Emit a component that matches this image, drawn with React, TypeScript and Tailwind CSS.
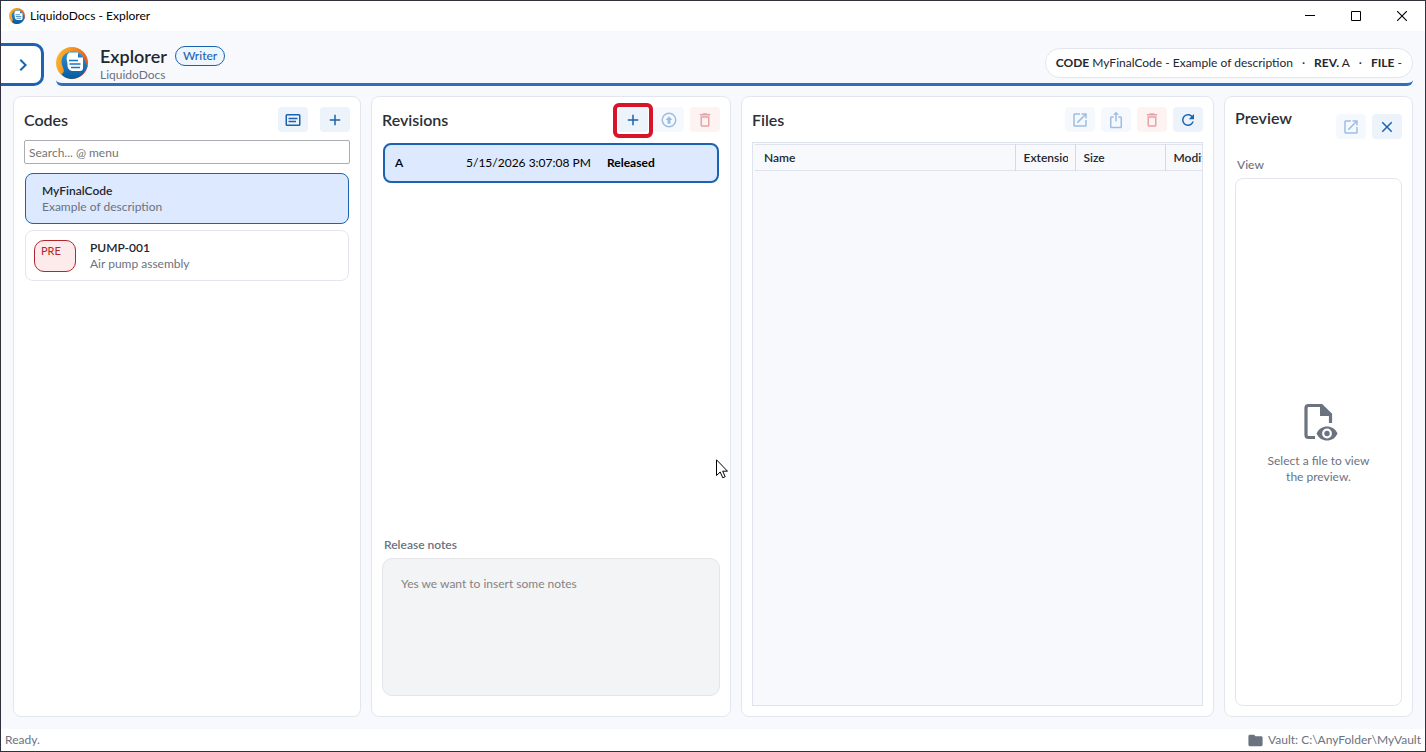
import React, { useState } from 'react'
import clsx from 'clsx'

const paths = {
  chevron: 'M8.59 16.58L13.17 12L8.59 7.41L10 6L16 12L10 18L8.59 16.58Z',
  card: 'M20 20H4A2 2 0 0 1 2 18V6A2 2 0 0 1 4 4H20A2 2 0 0 1 22 6V18A2 2 0 0 1 20 20M4 6V18H20V6H4M6 9H18V11H6V9M6 13H16V15H6V13Z',
  plus: 'M19 13H13V19H11V13H5V11H11V5H13V11H19V13Z',
  release:
    'M20 12A8 8 0 0 0 12 4A8 8 0 0 0 4 12A8 8 0 0 0 12 20A8 8 0 0 0 20 12M22 12A10 10 0 0 1 12 22A10 10 0 0 1 2 12A10 10 0 0 1 12 2A10 10 0 0 1 22 12M10 17V12H7.5L12 7L16.5 12H14V17H10Z',
  trash:
    'M6 19A2 2 0 0 0 8 21H16A2 2 0 0 0 18 19V7H6V19M8 9H16V19H8V9M15.5 4L14.5 3H9.5L8.5 4H5V6H19V4H15.5Z',
  open: 'M14 3V5H17.59L7.76 14.83L9.17 16.24L19 6.41V10H21V3M19 19H5V5H12V3H5C3.89 3 3 3.9 3 5V19A2 2 0 0 0 5 21H19A2 2 0 0 0 21 19V12H19V19Z',
  share:
    'M12 1L8 5H11V14H13V5H16M18 23H6C4.89 23 4 22.1 4 21V9A2 2 0 0 1 6 7H9V9H6V21H18V9H15V7H18A2 2 0 0 1 20 9V21A2 2 0 0 1 18 23Z',
  refresh:
    'M17.65 6.35C16.2 4.9 14.21 4 12 4A8 8 0 0 0 4 12A8 8 0 0 0 12 20C15.73 20 18.84 17.45 19.73 14H17.65C16.83 16.33 14.61 18 12 18A6 6 0 0 1 6 12A6 6 0 0 1 12 6C13.66 6 15.14 6.69 16.22 7.78L13 11H20V4L17.65 6.35Z',
  close:
    'M19 6.41L17.59 5L12 10.59L6.41 5L5 6.41L10.59 12L5 17.59L6.41 19L12 13.41L17.59 19L19 17.59L13.41 12L19 6.41Z',
  folder:
    'M10 4H4C2.89 4 2 4.89 2 6V18A2 2 0 0 0 4 20H20A2 2 0 0 0 22 18V8C22 6.89 21.1 6 20 6H12L10 4Z',
}

type IconName = keyof typeof paths

function Icon({ name, className = 'size-[18px]' }: { name: IconName; className?: string }) {
  return (
    <svg viewBox="0 0 24 24" fill="currentColor" aria-hidden="true" className={className}>
      <path d={paths[name]} />
    </svg>
  )
}

function Logo({ className }: { className: string }) {
  return (
    <svg viewBox="0 0 32 32" aria-hidden="true" className={className}>
      <defs>
        <linearGradient id="ring" x1="0" y1="0.3" x2="1" y2="0.6">
          <stop offset="0" stopColor="#fbb534" />
          <stop offset="0.5" stopColor="#f28a1e" />
          <stop offset="1" stopColor="#e2502c" />
        </linearGradient>
        <linearGradient id="drop" x1="0" y1="0" x2="0" y2="1">
          <stop offset="0" stopColor="#2b93d0" />
          <stop offset="1" stopColor="#075a9f" />
        </linearGradient>
      </defs>
      <circle cx="16" cy="16" r="16" fill="url(#ring)" />
      <path d="M8 8C12 3.500 21 3 26 8C29 12 29.500 16 31.500 19C29 27 23 32 15 32C10 31.500 7 29.500 5.500 27C8 26 8.500 24 7 20.500C5 16 5 11.500 8 8Z" fill="url(#drop)" />
      <path d="M14 5.500H22L27 10.500V21C27 23 26 24 24 24H18C14 24 11.500 22 11.500 18C11.500 14 10 13 11 9C11.500 7 12.500 5.500 14 5.500Z" fill="#fff" />
      <path d="M22 5.500V10.500H27Z" fill="#1c7fc2" />
      <path d="M13 13.500H22M13.500 17H24.500M15 20.500H24" stroke="#1876ba" strokeWidth="1.500" />
    </svg>
  )
}

function FileEye() {
  return (
    <svg viewBox="0 0 34 38" aria-hidden="true" className="h-[38px] w-[34px] text-[#6b7280]">
      <path d="M11 34.500H4.500Q2 34.500 2 32V5Q2 2.500 4.500 2.500H17.500L26.500 11.500V20" fill="none" stroke="currentColor" strokeWidth="3.200" />
      <path d="M16 2V13H28Z" fill="currentColor" />
      <path d="M12.500 30.500C15 25.500 18.500 23.500 23 23.500S31 25.500 33.500 30.500C31 35.500 27.500 37.500 23 37.500S15 35.500 12.500 30.500Z" fill="currentColor" />
      <circle cx="23" cy="30.500" r="3.800" fill="none" stroke="#fff" strokeWidth="2.200" />
    </svg>
  )
}

interface ToolButtonProps {
  icon: IconName
  label: string
  danger?: boolean
  disabled?: boolean
}

function ToolButton({ icon, label, danger, disabled }: ToolButtonProps) {
  return (
    <button
      type="button"
      aria-label={label}
      disabled={disabled}
      className={clsx(
        'flex h-[25px] w-[30px] items-center justify-center rounded',
        danger ? 'bg-[#fdf3f3] text-[#e6a3a6]' : disabled ? 'bg-[#f5f9fe] text-[#9dbde2]' : 'bg-[#ecf3fb] text-[#1b63b0]',
      )}
    >
      <Icon name={icon} />
    </button>
  )
}

function Panel({ className, children }: { className: string; children: React.ReactNode }) {
  return (
    <section className={clsx('flex min-h-0 flex-col rounded-lg border border-[#e3e6ef] bg-white p-[10px]', className)}>
      {children}
    </section>
  )
}

const heading = 'text-base leading-[26px] font-semibold text-[#2b2f36]'

const codes = [
  { code: 'MyFinalCode', description: 'Example of description', pre: false },
  { code: 'PUMP-001', description: 'Air pump assembly', pre: true },
]

export default function App() {
  const [selected, setSelected] = useState('MyFinalCode')
  const [search, setSearch] = useState('')

  return (
    <div className="relative flex h-screen flex-col overflow-hidden border border-[#30323f] bg-[#f7f9fd] font-[Lato,'Open_Sans',sans-serif] text-xs leading-4 text-[#23272e]">
      {/* Title bar */}
      <div className="flex h-[30px] shrink-0 items-center bg-white text-black">
        <Logo className="ml-2 size-4" />
        <span className="ml-[5px] flex-1">LiquidoDocs - Explorer</span>
        <button type="button" aria-label="Minimize" className="flex h-full w-[46px] items-center justify-center">
          <svg viewBox="0 0 10 10" className="size-[10px]" shapeRendering="crispEdges"><path d="M0 4.500H10" stroke="currentColor" /></svg>
        </button>
        <button type="button" aria-label="Maximize" className="flex h-full w-[46px] items-center justify-center">
          <svg viewBox="0 0 10 10" className="size-[10px]"><path d="M.5 .5H9.500V9.500H.5Z" fill="none" stroke="currentColor" /></svg>
        </button>
        <button type="button" aria-label="Close" className="flex h-full w-[46px] items-center justify-center">
          <svg viewBox="0 0 10 10" className="size-[10px]"><path d="M0 0L10 10M10 0L0 10" stroke="currentColor" strokeWidth="1.100" /></svg>
        </button>
      </div>

      {/* Header */}
      <header className="flex shrink-0 gap-3 pt-3 pr-3">
        <button
          type="button"
          aria-label="Open navigation"
          className="flex h-[43px] w-[43px] items-center justify-center rounded-r-[10px] border-3 border-l-0 border-[#1b63b0] bg-white pl-1 text-[#1b63b0]"
        >
          <Icon name="chevron" className="size-6" />
        </button>
        <div className="flex flex-1 items-start justify-between rounded-b-md border-b-3 border-[#2f6fb9]">
          <div className="flex gap-3">
            <Logo className="mt-1 size-8" />
            <div className="pt-[2px]">
              <div className="flex items-center gap-2">
                <h1 className="text-lg leading-[22px] font-semibold">Explorer</h1>
                <span className="rounded-full border border-[#1b63b0] bg-[#eef5fd] px-[7px] leading-[18px] font-medium text-[#1b63b0]">Writer</span>
              </div>
              <p className="text-[#6b7280]">LiquidoDocs</p>
            </div>
          </div>
          <div className="mt-[5px] flex h-[30px] items-center rounded-full border border-[#e3e6ef] bg-white px-[10px]">
            <span><b className="font-bold">CODE</b> MyFinalCode - Example of description</span>
            <span className="mx-[9px]">·</span>
            <span><b className="font-bold">REV.</b> A</span>
            <span className="mx-[9px]">·</span>
            <span><b className="font-bold">FILE</b> -</span>
          </div>
        </div>
      </header>

      <main className="flex min-h-0 flex-1 gap-[10px] px-3 pt-[10px] pb-3">
        <Panel className="w-[348px]">
          <div className="flex items-start justify-between">
            <h2 className={heading}>Codes</h2>
            <div className="flex gap-3">
              <ToolButton icon="card" label="Code details" />
              <ToolButton icon="plus" label="New code" />
            </div>
          </div>
          <input
            type="text"
            aria-label="Search codes"
            placeholder="Search... @ menu"
            value={search}
            onChange={e => setSearch(e.target.value)}
            className="mt-[7px] h-6 rounded-xs border border-[#abadb3] bg-white px-1 placeholder:text-[#757575]"
          />
          <ul className="mt-[9px] flex flex-col gap-[6px] px-px">
            {codes.map(item => (
              <li key={item.code}>
                <button
                  type="button"
                  onClick={() => setSelected(item.code)}
                  className={clsx(
                    'flex h-[51px] w-full items-center rounded-lg border text-left',
                    selected === item.code ? 'border-[#1b63b0] bg-[#dce9fe]' : 'border-[#e3e6ef] bg-white',
                    item.pre ? 'px-2' : 'px-4',
                  )}
                >
                  {item.pre && (
                    <span className="mr-[14px] h-8 w-[42px] rounded-[10px] border border-[#b3262b] bg-[#fdeaea] px-[6px] pt-[2px] text-[11px] text-[#b3262b]">
                      PRE
                    </span>
                  )}
                  <span className="flex flex-col">
                    <span className="font-semibold">{item.code}</span>
                    <span className="text-[#6b7280]">{item.description}</span>
                  </span>
                </button>
              </li>
            ))}
          </ul>
        </Panel>

        <Panel className="w-[360px]">
          <div className="flex items-start justify-between">
            <h2 className={heading}>Revisions</h2>
            <div className="flex gap-[6px]">
              <div className="relative">
                <ToolButton icon="plus" label="New revision" />
                <span className="pointer-events-none absolute -inset-x-[5px] -top-1 -bottom-[6px] rounded-md border-4 border-[#d8142a]" />
              </div>
              <ToolButton icon="release" label="Release" disabled />
              <ToolButton icon="trash" label="Delete revision" danger disabled />
            </div>
          </div>
          <div className="mt-[10px] flex-1 px-px">
            <button
              type="button"
              className="flex h-10 w-full items-center rounded-lg border-2 border-[#1b63b0] bg-[#dce9fe] px-[10px] text-left text-black"
            >
              <span className="w-[71px] font-semibold">A</span>
              <span className="w-[141px]">5/15/2026 3:07:08 PM</span>
              <span className="font-bold">Released</span>
            </button>
          </div>
          <label htmlFor="notes" className="mb-[5px] px-[2px] font-semibold text-[#6b7280]">Release notes</label>
          <textarea
            id="notes"
            readOnly
            defaultValue="Yes we want to insert some notes"
            className="mb-[10px] h-[138px] resize-none rounded-[10px] border border-[#e3e5e8] bg-[#f3f4f6] px-[18px] py-[17px] text-[#838383]"
          />
        </Panel>

        <Panel className="min-w-0 flex-1">
          <div className="flex items-start justify-between">
            <h2 className={heading}>Files</h2>
            <div className="flex gap-[6px]">
              <ToolButton icon="open" label="Open file" disabled />
              <ToolButton icon="share" label="Export file" disabled />
              <ToolButton icon="trash" label="Delete file" danger disabled />
              <ToolButton icon="refresh" label="Refresh files" />
            </div>
          </div>
          <div className="mt-[9px] flex-1 overflow-hidden border border-[#dfe3ee] bg-[#f7f9fd] pt-px pl-[2px]">
            <table className="w-full table-fixed border-collapse text-left">
              <thead>
                <tr className="h-[26px] border-y border-[#dfe3ee]">
                  <th className="px-[9px] font-semibold">Name</th>
                  <th className="w-[60px] border-l border-[#d5d9e3] pr-[7px] pl-2 font-semibold"><div className="overflow-hidden">Extension</div></th>
                  <th className="w-[90px] border-l border-[#d5d9e3] px-2 font-semibold">Size</th>
                  <th className="w-[37px] border-l border-[#d5d9e3] pl-2 font-semibold"><div className="overflow-hidden">Modified</div></th>
                </tr>
              </thead>
              <tbody />
            </table>
          </div>
        </Panel>

        <Panel className="w-[189px]">
          <div className="flex items-start justify-between">
            <h2 className="text-base leading-[22px] font-semibold text-[#2b2f36]">Preview</h2>
            <div className="flex gap-[6px] pt-[7px]">
              <ToolButton icon="open" label="Open preview" disabled />
              <ToolButton icon="close" label="Close preview" />
            </div>
          </div>
          <h3 className="mt-[18px] px-[2px] font-medium text-[#6b7280]">View</h3>
          <div className="mt-[5px] flex flex-1 flex-col items-center justify-center gap-3 rounded-lg border border-[#e3e6ef] pt-1 text-center text-[#6b7280]">
            <div className="pl-1">
              <FileEye />
            </div>
            <p className="w-[120px]">Select a file to view the preview.</p>
          </div>
        </Panel>
      </main>

      {/* Status bar */}
      <footer className="flex h-[22px] shrink-0 items-center justify-between bg-white px-1 text-[#6b7280]">
        <span>Ready.</span>
        <span className="flex items-center gap-1">
          <Icon name="folder" className="size-[17px]" />
          Vault: C:\AnyFolder\MyVault
        </span>
      </footer>

      {/* Mouse pointer */}
      <svg viewBox="0 0 12 20" aria-hidden="true" className="pointer-events-none absolute top-[458px] left-[715px] h-5 w-3">
        <path d="M.5 .8V16.500L4.200 13L6.800 18.800L9.200 17.700L6.700 12.200H11.500Z" fill="#fff" stroke="#000" />
      </svg>
    </div>
  )
}
